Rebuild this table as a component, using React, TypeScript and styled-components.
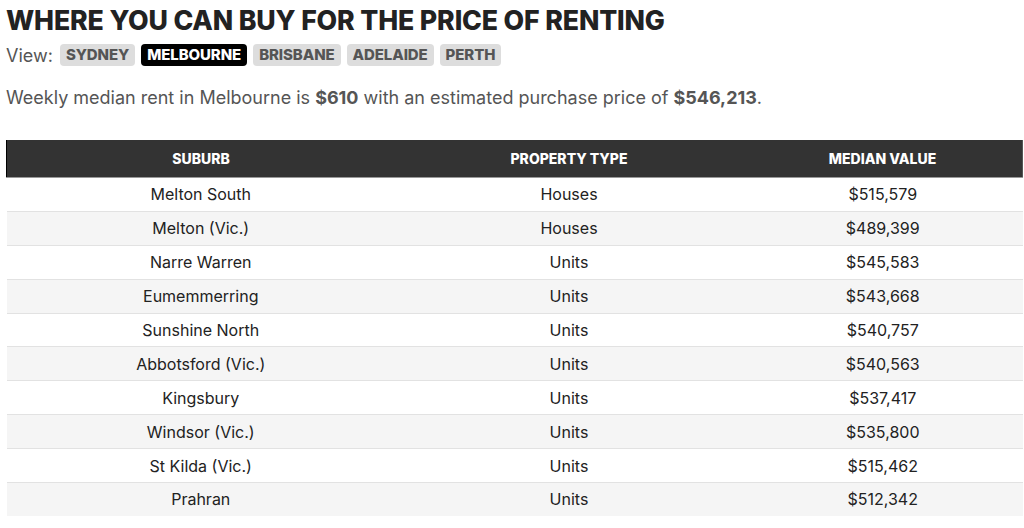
import React from "react";
import styled, { createGlobalStyle } from "styled-components";

const Global = createGlobalStyle`
  html, body { margin: 0; padding: 0; background: #fff; }
  body { font-family: "Inter", "Liberation Sans", sans-serif; color: #222; }
`;

const Page = styled.div`
  padding: 5px 3px 0 6px;
  display: flex;
  flex-direction: column;
`;

const Title = styled.h1`
  margin: 0;
  font-family: "Inter", sans-serif;
  font-weight: 800;
  font-size: 26.7px;
  line-height: 30px;
  color: #222;
  letter-spacing: -0.15px;
`;

const ViewRow = styled.div`
  display: flex;
  align-items: center;
  gap: 6px;
  margin-top: 9px;
  height: 22px;
`;

const ViewLabel = styled.span`
  font-size: 18px;
  color: #555;
  margin-right: 1px;
`;

const Pill = styled.button<{ $active?: boolean }>`
  font-family: "Inter", sans-serif;
  font-weight: 800;
  font-size: 15px;
  letter-spacing: -0.1px;
  border: none;
  border-radius: 4px;
  padding: 0 6px;
  height: 22px;
  line-height: 22px;
  background: ${(p) => (p.$active ? "#000" : "#ddd")};
  color: ${(p) => (p.$active ? "#fff" : "#555")};
  cursor: pointer;
`;

const Summary = styled.p`
  margin: 20px 0 0;
  font-size: 18px;
  line-height: 24px;
  color: #555;
  b { font-weight: 700; }
`;

const Table = styled.table`
  margin-top: 30px;
  width: 1015px;
  border-collapse: collapse;
  table-layout: fixed;
`;

const Th = styled.th<{ $w: number }>`
  width: ${(p) => p.$w}px;
  background: #333;
  color: #fff;
  font-weight: 800;
  font-size: 14px;
  height: 37px;
  padding: 0;
  text-align: center;
  border-bottom: 1px solid #999;
  &:first-child { border-left: 1px solid #000; }
  &:last-child { border-right: 1px solid #555; }
`;

const Tr = styled.tr`
  &:nth-child(even) td { background: #f5f5f5; }
  & + & td { border-top: 1px solid #e2e2e2; }
`;

const Td = styled.td`
  height: 32.9px;
  padding: 0;
  text-align: center;
  font-size: 16px;
  color: #222;
`;

const rows: [string, string, string][] = [
  ["Melton South", "Houses", "$515,579"],
  ["Melton (Vic.)", "Houses", "$489,399"],
  ["Narre Warren", "Units", "$545,583"],
  ["Eumemmerring", "Units", "$543,668"],
  ["Sunshine North", "Units", "$540,757"],
  ["Abbotsford (Vic.)", "Units", "$540,563"],
  ["Kingsbury", "Units", "$537,417"],
  ["Windsor (Vic.)", "Units", "$535,800"],
  ["St Kilda (Vic.)", "Units", "$515,462"],
  ["Prahran", "Units", "$512,342"],
];

const cities = ["SYDNEY", "MELBOURNE", "BRISBANE", "ADELAIDE", "PERTH"];

export default function App() {
  return (
    <Page>
      <Global />
      <Title>WHERE YOU CAN BUY FOR THE PRICE OF RENTING</Title>
      <ViewRow>
        <ViewLabel>View:</ViewLabel>
        {cities.map((c) => (
          <Pill key={c} $active={c === "MELBOURNE"}>{c}</Pill>
        ))}
      </ViewRow>
      <Summary>
        Weekly median rent in Melbourne is <b>$610</b> with an estimated purchase price of <b>$546,213</b>.
      </Summary>
      <Table>
        <thead>
          <tr>
            <Th $w={388}>SUBURB</Th>
            <Th $w={348}>PROPERTY TYPE</Th>
            <Th $w={279}>MEDIAN VALUE</Th>
          </tr>
        </thead>
        <tbody>
          {rows.map((r) => (
            <Tr key={r[0]}>
              <Td>{r[0]}</Td>
              <Td>{r[1]}</Td>
              <Td>{r[2]}</Td>
            </Tr>
          ))}
        </tbody>
      </Table>
    </Page>
  );
}
